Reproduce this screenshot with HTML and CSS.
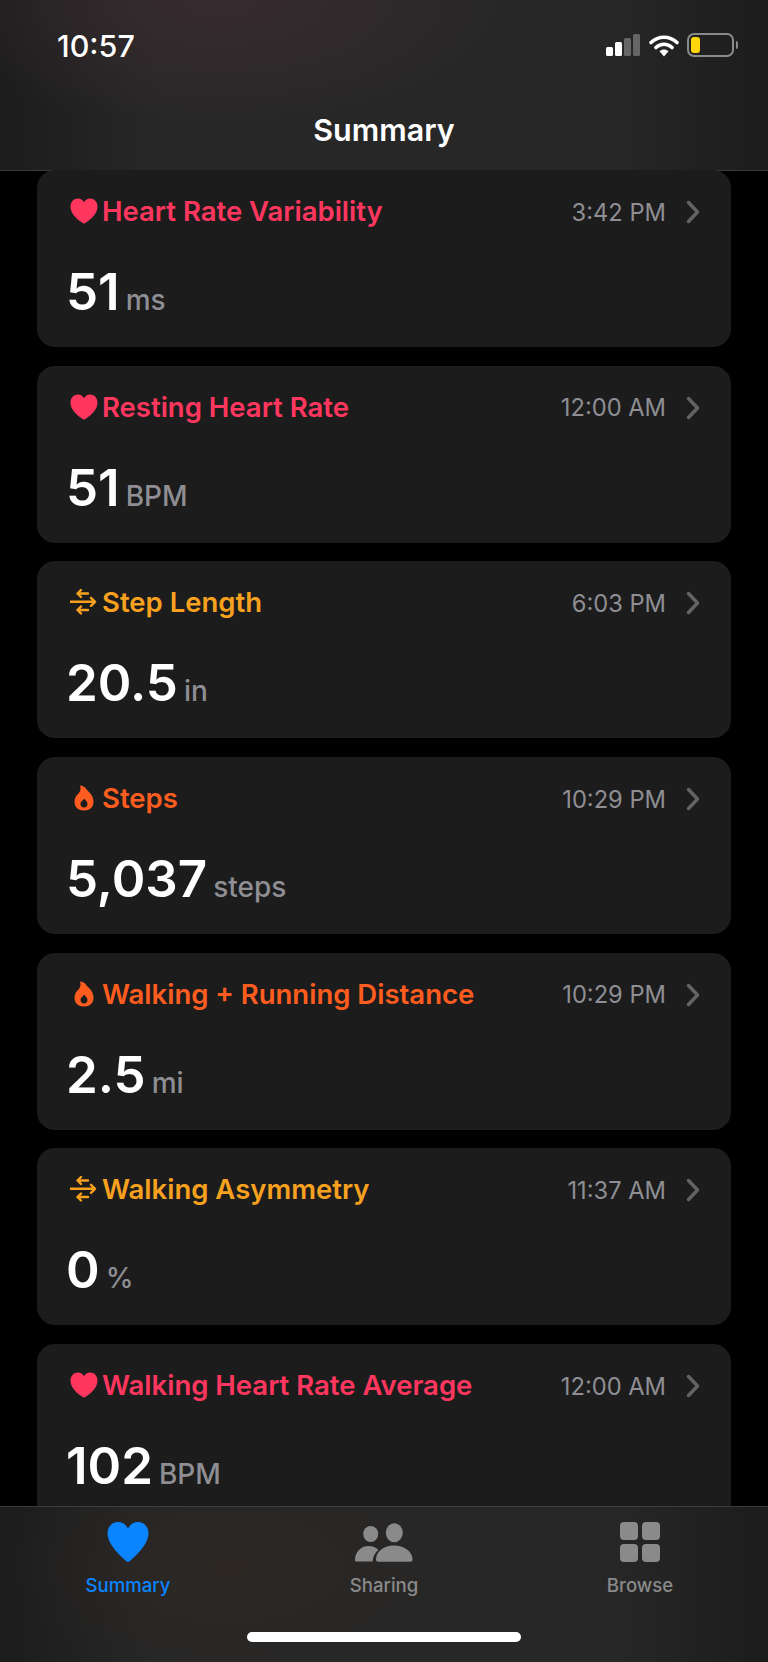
FILE: index.html

```html
<!DOCTYPE html>
<html lang="en">
<head>
  <meta charset="UTF-8" />
  <meta name="viewport" content="width=device-width, initial-scale=1.0"/>
  <title>Summary</title>
  <link rel="stylesheet" href="styles.css">
</head>
<body>
  <svg class="defs" width="0" height="0">
    <symbol id="heart" viewBox="0 0 28 26">
      <path fill="currentColor" d="M14 25.500C13.400 25.500 12.800 25.200 12 24.600 5 19.800 .5 15 .5 8.600.5 3.800 3.900.5 8 .5c2.700 0 4.700 1.400 6 3.700C15.300 1.900 17.300.5 20 .5c4.100 0 7.500 3.300 7.500 8.100 0 6.400-4.500 11.200-11.500 16-.8.600-1.400.900-2 .900z"/>
    </symbol>
    <symbol id="arrows" viewBox="0 0 28 26">
      <path fill="none" stroke="currentColor" stroke-width="2.400" stroke-linecap="round" stroke-linejoin="round" d="M11 1 7.500 4.500 11 8M7.500 4.500H18M.5 12.800H25M21 8.800 25 12.800 21 16.800M11 17.500 7.500 21 11 24.500M7.500 21H18"/>
    </symbol>
    <symbol id="flame" viewBox="0 0 28 26">
      <path fill="currentColor" fill-rule="evenodd" d="M10 .5c5.500 .5 6 4 9 6.500 3 2.800 4.500 6 4.500 10 0 5-4 8.500-9.500 8.500S4.500 22 4.500 17c0-3 1-5.500 3-7.500C9.500 7.500 11.500 5 10 .5zM14.500 13.500c-.5 1.500-4 2.500-4 5.500 0 2 1.500 3.500 3.500 3.500s3.500-1.500 3.500-3.500c0-2.500-2.500-3.500-3-5.500z"/>
    </symbol>
  </svg>

  <div class="screen">
    <header class="topbar">
      <div class="status">
        <span class="clock">10:57</span>
        <div class="status-icons">
          <svg class="signal" width="36" height="24" viewBox="0 0 36 24">
            <rect x="1" y="14" width="7" height="9" rx="1.500" fill="#fff"/>
            <rect x="10" y="9" width="7" height="14" rx="1.500" fill="#fff"/>
            <rect x="19" y="5" width="7" height="18" rx="1.500" fill="#666"/>
            <rect x="28" y="1" width="7" height="22" rx="1.500" fill="#666"/>
          </svg>
          <svg class="wifi" width="30" height="23" viewBox="0 0 30 23">
            <path d="M2 8.500C9.500 1.500 20.500 1.500 28 8.500M7 13.500c4.700-4.300 11.300-4.300 16 0" fill="none" stroke="#fff" stroke-width="3.600" stroke-linecap="round"/>
            <path d="M10.500 17.200c2.700-2.300 6.300-2.300 9 0L15 22.500z" fill="#fff"/>
          </svg>
          <div class="battery">
            <div class="battery-body"><span class="battery-level"></span></div>
            <span class="battery-cap"></span>
          </div>
        </div>
      </div>
      <h1 class="title">Summary</h1>
    </header>

    <main class="list">
      <article class="card pink">
        <div class="card-head">
          <svg class="icon"><use href="#heart"/></svg>
          <span class="name">Heart Rate Variability</span>
          <span class="time">3:42 PM</span>
          <svg class="chevron" width="14" height="24" viewBox="0 0 14 24"><path d="M2.500 2.500 11.500 12l-9 9.500"/></svg>
        </div>
        <div class="reading"><span class="value">51</span><span class="unit">ms</span></div>
      </article>

      <article class="card pink">
        <div class="card-head">
          <svg class="icon"><use href="#heart"/></svg>
          <span class="name">Resting Heart Rate</span>
          <span class="time">12:00 AM</span>
          <svg class="chevron" width="14" height="24" viewBox="0 0 14 24"><path d="M2.500 2.500 11.500 12l-9 9.500"/></svg>
        </div>
        <div class="reading"><span class="value">51</span><span class="unit">BPM</span></div>
      </article>

      <article class="card amber">
        <div class="card-head">
          <svg class="icon"><use href="#arrows"/></svg>
          <span class="name">Step Length</span>
          <span class="time">6:03 PM</span>
          <svg class="chevron" width="14" height="24" viewBox="0 0 14 24"><path d="M2.500 2.500 11.500 12l-9 9.500"/></svg>
        </div>
        <div class="reading"><span class="value">20.5</span><span class="unit">in</span></div>
      </article>

      <article class="card orange">
        <div class="card-head">
          <svg class="icon"><use href="#flame"/></svg>
          <span class="name">Steps</span>
          <span class="time">10:29 PM</span>
          <svg class="chevron" width="14" height="24" viewBox="0 0 14 24"><path d="M2.500 2.500 11.500 12l-9 9.500"/></svg>
        </div>
        <div class="reading"><span class="value">5,037</span><span class="unit">steps</span></div>
      </article>

      <article class="card orange">
        <div class="card-head">
          <svg class="icon"><use href="#flame"/></svg>
          <span class="name">Walking + Running Distance</span>
          <span class="time">10:29 PM</span>
          <svg class="chevron" width="14" height="24" viewBox="0 0 14 24"><path d="M2.500 2.500 11.500 12l-9 9.500"/></svg>
        </div>
        <div class="reading"><span class="value">2.5</span><span class="unit">mi</span></div>
      </article>

      <article class="card amber">
        <div class="card-head">
          <svg class="icon"><use href="#arrows"/></svg>
          <span class="name">Walking Asymmetry</span>
          <span class="time">11:37 AM</span>
          <svg class="chevron" width="14" height="24" viewBox="0 0 14 24"><path d="M2.500 2.500 11.500 12l-9 9.500"/></svg>
        </div>
        <div class="reading"><span class="value">0</span><span class="unit">%</span></div>
      </article>

      <article class="card pink">
        <div class="card-head">
          <svg class="icon"><use href="#heart"/></svg>
          <span class="name">Walking Heart Rate Average</span>
          <span class="time">12:00 AM</span>
          <svg class="chevron" width="14" height="24" viewBox="0 0 14 24"><path d="M2.500 2.500 11.500 12l-9 9.500"/></svg>
        </div>
        <div class="reading"><span class="value">102</span><span class="unit">BPM</span></div>
      </article>
    </main>

    <nav class="tabbar">
      <div class="tabs">
        <div class="tab active">
          <svg class="tab-icon" width="44" height="42" viewBox="0 0 44 42">
            <path d="M22 41C21 41 20 40 19 39 9 30 1.500 21 1.500 12 1.500 5.500 6.500 1 12 1c4.500 0 8 2.500 10 6.500C24 3.500 27.500 1 32 1c5.500 0 10.500 4.500 10.500 11 0 9-7.500 18-17.500 27-1 1-2 2-3 2z" fill="#0a84ff"/>
          </svg>
          <span>Summary</span>
        </div>
        <div class="tab">
          <svg class="tab-icon" width="60" height="42" viewBox="0 0 60 42">
            <ellipse cx="16.700" cy="13" rx="7.500" ry="8" fill="#8a8a8a"/>
            <ellipse cx="40.300" cy="11.700" rx="8.500" ry="9.500" fill="#8a8a8a"/>
            <path d="M1 39c0-8 6-14 13.500-14 4 0 7.500 1.500 10 4-3.500 2.500-5.500 6-6 11.500H2.500c-1 0-1.500-.5-1.500-1.500z" fill="#8a8a8a"/>
            <path d="M22 38.500c0-8 8-14 18-14s18.500 6 18.500 14c0 1.500-1 2.200-2.500 2.200H24.500c-1.500 0-2.500-.7-2.500-2.200z" fill="#8a8a8a"/>
          </svg>
          <span>Sharing</span>
        </div>
        <div class="tab">
          <div class="tab-icon browse">
            <span></span><span></span><span></span><span></span>
          </div>
          <span>Browse</span>
        </div>
      </div>
      <div class="home-bar"></div>
    </nav>
  </div>
</body>
</html>
```

FILE: styles.css

```css
body {
  margin: 0;
  background-color: #000;
  font-family: Inter, 'Liberation Sans', sans-serif;
  color: #fff;
}
.defs {
  display: block;
  height: 0;
}
.screen {
  display: flex;
  flex-direction: column;
  width: 768px;
  height: 1662px;
  overflow: hidden;
}

/* top bar */
.topbar {
  flex: none;
  height: 171px;
  box-sizing: border-box;
  border-bottom: 1px solid #3c3c3e;
  background: radial-gradient(ellipse 300px 130px at 220px 0, #372b2e, transparent), linear-gradient(90deg, #1c1c1c, #272727 20%, #272727 80%, #1c1c1c);
}
.status {
  display: flex;
  justify-content: space-between;
  align-items: center;
  height: 44px;
  padding: 23px 30px 0 57px;
}
.clock {
  font-size: 30.500px;
  font-weight: 500;
}
.status-icons {
  display: flex;
  align-items: center;
  gap: 8px;
}
.battery {
  display: flex;
  align-items: center;
  gap: 2px;
}
.battery-body {
  width: 47px;
  height: 24px;
  box-sizing: border-box;
  border: 2px solid #8a8a8a;
  border-radius: 7px;
  padding: 2px;
}
.battery-level {
  display: block;
  width: 9px;
  height: 100%;
  border-radius: 3px;
  background-color: #ffd60a;
}
.battery-cap {
  width: 2px;
  height: 8px;
  border-radius: 0 2px 2px 0;
  background-color: #8a8a8a;
}
.title {
  margin: 41px 0 0;
  font-size: 30.500px;
  font-weight: 600;
  line-height: 44px;
  text-align: center;
}

/* cards */
.list {
  flex: 1;
  min-height: 0;
  overflow: hidden;
  display: flex;
  flex-direction: column;
  gap: 18.700px;
  margin-top: -1px;
  padding: 0 37px;
}
.card {
  flex: none;
  height: 177px;
  box-sizing: border-box;
  padding: 24px 31px 0 31px;
  border-radius: 18px;
  background-color: #1c1c1d;
}
.card-head {
  display: flex;
  align-items: center;
  height: 34px;
}
.icon {
  flex: none;
  width: 28px;
  height: 26px;
  margin-right: 4px;
  margin-left: 2px;
}
.name {
  flex: 1;
  font-size: 27.500px;
  font-weight: 600;
}
.time {
  margin-top: 2px;
  font-size: 23.700px;
  color: #8e8e93;
}
.chevron {
  margin: 2px 0 0 20px;
  fill: none;
  stroke: #636366;
  stroke-width: 3.500;
  stroke-linecap: round;
  stroke-linejoin: round;
}
.pink { color: #ff375f; }
.amber { color: #f8a11e; }
.orange { color: #ff5c1f; }
.reading {
  display: flex;
  align-items: baseline;
  margin-top: 33px;
}
.value {
  margin-left: -2px;
  font-size: 51px;
  font-weight: 600;
  color: #fff;
}
.unit {
  margin-left: 6px;
  font-size: 28px;
  font-weight: 500;
  color: #8e8e93;
}

/* tab bar */
.tabbar {
  flex: none;
  height: 156px;
  box-sizing: border-box;
  border-top: 1px solid #3c3c3e;
  background: radial-gradient(ellipse 220px 110px at 230px 60px, #2c2723, transparent), linear-gradient(90deg, #1c1c1c, #272727 20%, #272727 80%, #1c1c1c);
}
.tabs {
  display: grid;
  grid-template-columns: repeat(3, 1fr);
  padding: 14px 0 0;
}
.tab {
  display: flex;
  flex-direction: column;
  align-items: center;
  gap: 11px;
  font-size: 18.600px;
  font-weight: 500;
  color: #8a8a8a;
}
.tab.active {
  color: #0a84ff;
}
.tab-icon {
  display: block;
}
.browse {
  display: grid;
  grid-template-columns: 18px 18px;
  grid-template-rows: 18px 18px;
  gap: 4px;
  height: 42px;
  align-content: center;
}
.browse span {
  border-radius: 4px;
  background-color: #8a8a8a;
}
.home-bar {
  width: 274px;
  height: 10px;
  margin: 36px auto 0;
  border-radius: 5px;
  background-color: #fff;
}
```
